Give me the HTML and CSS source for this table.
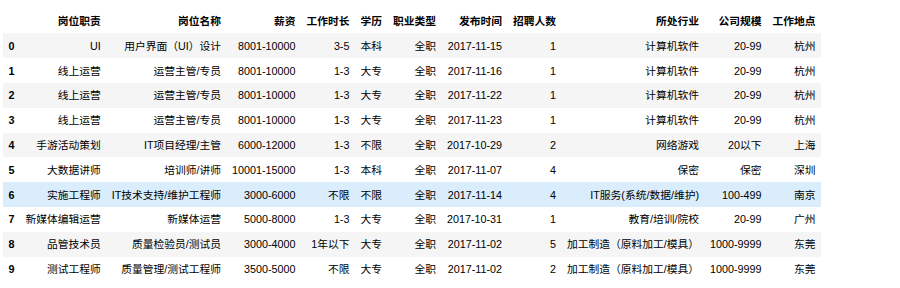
FILE: index.html
```html
<!DOCTYPE html>
<html lang="zh-CN">
<head>
<meta charset="utf-8">
<link rel="stylesheet" href="styles.css">
</head>
<body>
<table class="dataframe">
  <thead>
    <tr>
      <th></th><th>岗位职责</th><th>岗位名称</th><th>薪资</th><th>工作时长</th><th>学历</th><th>职业类型</th><th>发布时间</th><th>招聘人数</th><th>所处行业</th><th>公司规模</th><th>工作地点</th>
    </tr>
  </thead>
  <tbody>
    <tr><th>0</th><td>UI</td><td>用户界面（UI）设计</td><td>8001-10000</td><td>3-5</td><td>本科</td><td>全职</td><td>2017-11-15</td><td>1</td><td>计算机软件</td><td>20-99</td><td>杭州</td></tr>
    <tr><th>1</th><td>线上运营</td><td>运营主管/专员</td><td>8001-10000</td><td>1-3</td><td>大专</td><td>全职</td><td>2017-11-16</td><td>1</td><td>计算机软件</td><td>20-99</td><td>杭州</td></tr>
    <tr><th>2</th><td>线上运营</td><td>运营主管/专员</td><td>8001-10000</td><td>1-3</td><td>大专</td><td>全职</td><td>2017-11-22</td><td>1</td><td>计算机软件</td><td>20-99</td><td>杭州</td></tr>
    <tr><th>3</th><td>线上运营</td><td>运营主管/专员</td><td>8001-10000</td><td>1-3</td><td>大专</td><td>全职</td><td>2017-11-23</td><td>1</td><td>计算机软件</td><td>20-99</td><td>杭州</td></tr>
    <tr><th>4</th><td>手游活动策划</td><td>IT项目经理/主管</td><td>6000-12000</td><td>1-3</td><td>不限</td><td>全职</td><td>2017-10-29</td><td>2</td><td>网络游戏</td><td>20以下</td><td>上海</td></tr>
    <tr><th>5</th><td>大数据讲师</td><td>培训师/讲师</td><td>10001-15000</td><td>1-3</td><td>本科</td><td>全职</td><td>2017-11-07</td><td>4</td><td>保密</td><td>保密</td><td>深圳</td></tr>
    <tr class="hover"><th>6</th><td>实施工程师</td><td>IT技术支持/维护工程师</td><td>3000-6000</td><td>不限</td><td>不限</td><td>全职</td><td>2017-11-14</td><td>4</td><td>IT服务(系统/数据/维护)</td><td>100-499</td><td>南京</td></tr>
    <tr><th>7</th><td>新媒体编辑运营</td><td>新媒体运营</td><td>5000-8000</td><td>1-3</td><td>大专</td><td>全职</td><td>2017-10-31</td><td>1</td><td>教育/培训/院校</td><td>20-99</td><td>广州</td></tr>
    <tr><th>8</th><td>品管技术员</td><td>质量检验员/测试员</td><td>3000-4000</td><td>1年以下</td><td>大专</td><td>全职</td><td>2017-11-02</td><td>5</td><td>加工制造（原料加工/模具）</td><td>1000-9999</td><td>东莞</td></tr>
    <tr><th>9</th><td>测试工程师</td><td>质量管理/测试工程师</td><td>3500-5000</td><td>不限</td><td>大专</td><td>全职</td><td>2017-11-02</td><td>2</td><td>加工制造（原料加工/模具）</td><td>1000-9999</td><td>东莞</td></tr>
  </tbody>
</table>
</body>
</html>
```
FILE: styles.css
```css
html, body {
  margin: 0;
  padding: 0;
  background: #fff;
}
body {
  padding: 8.7px 0 0 3px;
}
.dataframe {
  border-collapse: collapse;
  border: none;
  font-family: "Liberation Sans", "Noto Sans CJK SC", sans-serif;
  font-size: 10.75px;
  color: #000;
  table-layout: auto;
}
.dataframe th,
.dataframe td {
  padding: 5.4px 5.5px;
  line-height: 14px;
  text-align: right;
  vertical-align: middle;
  white-space: nowrap;
  border: none;
}
.dataframe th {
  font-weight: bold;
}
.dataframe tbody th {
  text-align: left;
}
.dataframe tbody tr:nth-child(odd) {
  background: #f5f5f5;
}
.dataframe tbody tr.hover {
  background: #d9edfd;
}
```
